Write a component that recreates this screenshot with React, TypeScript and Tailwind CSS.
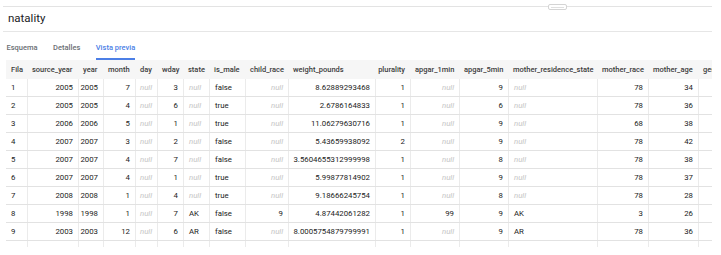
type Col = { name: string; w: string; num: boolean; headRight?: boolean }

const cols: Col[] = [
  { name: 'Fila', w: 'w-[21px]', num: false },
  { name: 'source_year', w: 'w-[51px]', num: true },
  { name: 'year', w: 'w-[25px]', num: true },
  { name: 'month', w: 'w-[32px]', num: true },
  { name: 'day', w: 'w-[22px]', num: true },
  { name: 'wday', w: 'w-[26px]', num: true },
  { name: 'state', w: 'w-[26px]', num: false },
  { name: 'is_male', w: 'w-[36px]', num: false },
  { name: 'child_race', w: 'w-[43px]', num: true },
  { name: 'weight_pounds', w: 'w-[87px]', num: true },
  { name: 'plurality', w: 'w-[35px]', num: true, headRight: true },
  { name: 'apgar_1min', w: 'w-[49px]', num: true },
  { name: 'apgar_5min', w: 'w-[49px]', num: true },
  { name: 'mother_residence_state', w: 'w-[89px]', num: false },
  { name: 'mother_race', w: 'w-[51px]', num: true },
  { name: 'mother_age', w: 'w-[50px]', num: true },
  { name: 'gestation_weeks', w: 'w-[70px]', num: true },
]

const N = null
const rows: (string | number | null)[][] = [
  [1, 2005, 2005, 7, N, 3, N, 'false', N, '8.62889293468', 1, N, 9, N, 78, 34, ''],
  [2, 2005, 2005, 4, N, 6, N, 'true', N, '2.6786164833', 1, N, 6, N, 78, 36, ''],
  [3, 2006, 2006, 5, N, 1, N, 'true', N, '11.06279630716', 1, N, 9, N, 68, 38, ''],
  [4, 2007, 2007, 3, N, 2, N, 'false', N, '5.43659938092', 2, N, 9, N, 78, 42, ''],
  [5, 2007, 2007, 4, N, 7, N, 'false', N, '3.5604655312999998', 1, N, 8, N, 78, 38, ''],
  [6, 2007, 2007, 4, N, 1, N, 'true', N, '5.99877814902', 1, N, 9, N, 78, 37, ''],
  [7, 2008, 2008, 1, N, 4, N, 'true', N, '9.18666245754', 1, N, 8, N, 78, 28, ''],
  [8, 1998, 1998, 1, N, 7, 'AK', 'false', 9, '4.87442061282', 1, 99, 9, 'AK', 3, 26, ''],
  [9, 2003, 2003, 12, N, 6, 'AR', 'false', N, '8.0005754879799991', 1, N, 9, 'AR', 78, 36, ''],
]

function Cell({ col, i, v }: { col: Col; i: number; v: string | number | null }) {
  return (
    <div
      className={`${col.w} shrink-0 h-full px-[5px] flex items-center whitespace-nowrap ${
        col.num ? 'justify-end' : 'justify-start'
      } ${i > 0 ? 'border-l border-[#ebebeb]' : ''}`}
    >
      {v === null ? <span className="italic text-[#c4c4c4]">null</span> : <span>{v}</span>}
    </div>
  )
}

export default function App() {
  return (
    <div className="w-[721px] h-[255px] bg-white overflow-hidden font-['Roboto',sans-serif] text-[#222]">
      {/* top strip with drag handle */}
      <div className="pt-[6px] pl-[3px]">
        <div className="relative w-[709px] border-t border-[#e3e3e3]">
          <div className="absolute left-[545px] -top-[3px] w-[19px] h-[6px] rounded-[2px] border border-[#d4d4d4] bg-white flex items-center justify-center">
            <div className="w-[13px] h-px bg-[#e0e0e0]" />
          </div>
        </div>
      </div>

      <div className="h-[24px] pl-[8px] flex items-center text-[11.5px] text-[#202124]">natality</div>

      <div className="pl-[3px]">
        <div className="w-[709px] border-t border-[#e6e6e6]" />
      </div>

      <div className="h-[28px] pl-[6.5px] flex items-end gap-[15.5px] text-[7.5px] font-medium">
        <div className="leading-[10px] pb-[5px] border-b-2 border-transparent text-[#6b6f74]">Esquema</div>
        <div className="leading-[10px] pb-[5px] border-b-2 border-transparent text-[#6b6f74]">Detalles</div>
        <div className="leading-[10px] pb-[5px] border-b-2 border-[#4c7fe6] text-[#4c7fe6]">Vista previa</div>
      </div>

      <div className="ml-[6px] w-[706px] overflow-hidden">
        <div className="flex h-[19px] bg-[#f6f6f6] text-[7.5px] font-medium text-[#3c3c3c]">
          {cols.map((c) => (
            <div
              key={c.name}
              className={`${c.w} shrink-0 px-[5px] flex items-center whitespace-nowrap ${
                c.headRight ? 'justify-end' : 'justify-start'
              }`}
            >
              {c.name}
            </div>
          ))}
        </div>

        {rows.map((r, ri) => (
          <div key={ri} className="flex h-[18px] border-b border-[#e2e2e2] text-[7.8px]">
            {cols.map((c, i) => (
              <Cell key={c.name} col={c} i={i} v={r[i]} />
            ))}
          </div>
        ))}

        <div className="flex h-[6px]">
          {cols.map((c, i) => (
            <div key={c.name} className={`${c.w} shrink-0 ${i > 0 ? 'border-l border-[#ebebeb]' : ''}`} />
          ))}
        </div>
      </div>
    </div>
  )
}
